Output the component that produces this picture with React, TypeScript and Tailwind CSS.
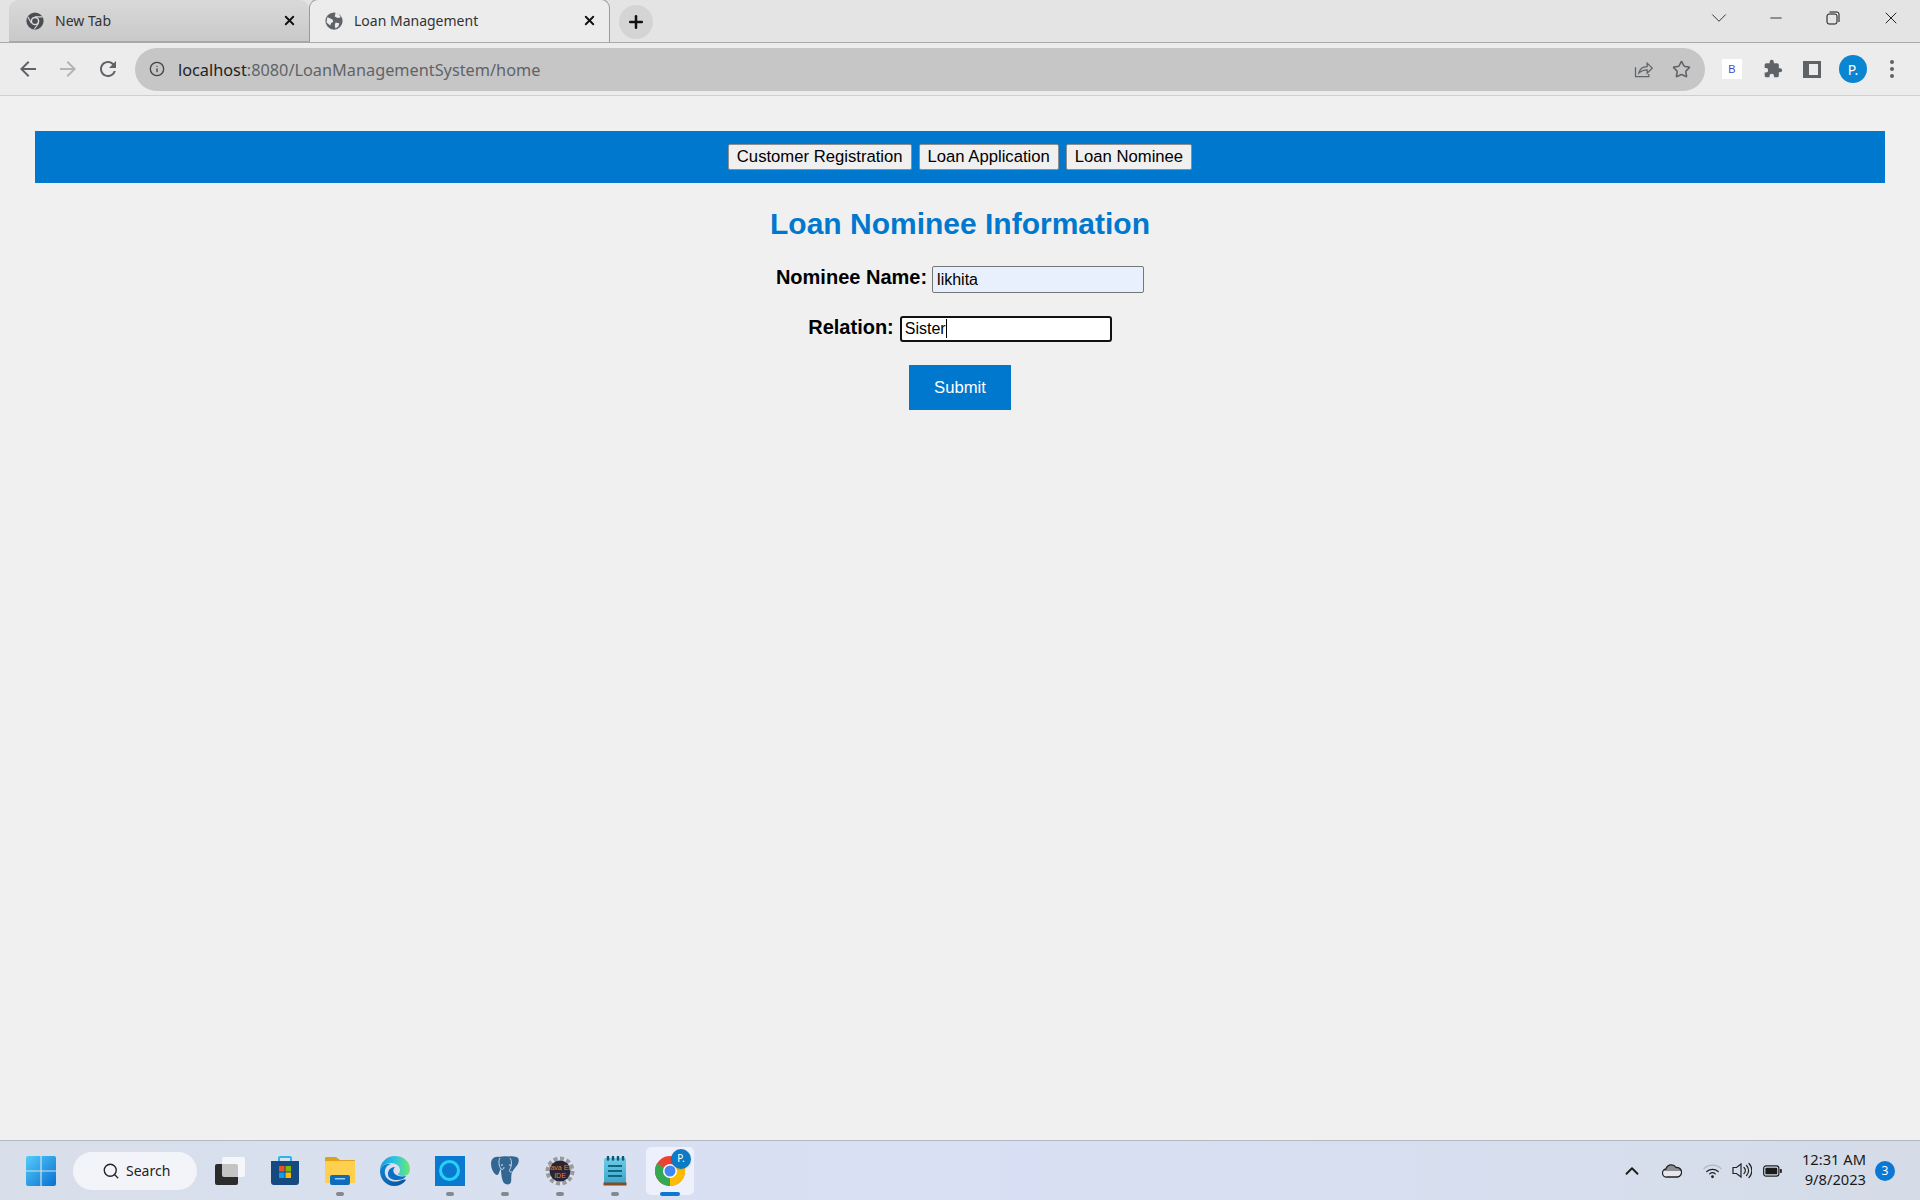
import { ChevronDown, ChevronUp, Info, Minus, Plus, Search, Star, X } from 'lucide-react'

const uiFont = 'font-["Noto_Sans",sans-serif]'

function ChromeGlyph({ size = 18 }: { size?: number }) {
  return (
    <svg width={size} height={size} viewBox="0 0 24 24">
      <circle cx="12" cy="12" r="11.500" fill="#4a4d52" />
      <circle cx="12" cy="12" r="5.800" fill="#dcdcdc" />
      <circle cx="12" cy="12" r="3.800" fill="#4a4d52" />
      <path d="M12 6.500h10M7.200 15 2.500 6.500M16.800 15 11 23" stroke="#dcdcdc" strokeWidth="1.400" />
    </svg>
  )
}

function GlobeGlyph() {
  return (
    <svg width="18" height="18" viewBox="0 0 24 24">
      <circle cx="12" cy="12" r="11.500" fill="#5f6368" />
      <path d="M3 7c3 1 5 2 7 3l1 3-3 2-1 3-5-4zM14 1l4 1 3 5-4 1-4-2zM14 14l5 1-1 4-4 3-1-4z" fill="#ececec" />
    </svg>
  )
}

function Tab({ title, active, icon }: { title: string; active?: boolean; icon: React.ReactNode }) {
  return (
    <div
      className={
        active
          ? 'flex h-[43px] w-[301px] items-center rounded-t-[9px] border border-b-0 border-[#9a9a9a] bg-[#ececec] pb-[1px] pl-[15px] pr-[12px]'
          : 'flex h-[42px] w-[300px] items-center rounded-t-[9px] border-b border-[#a8a8a8] bg-gradient-to-b from-[#d9d9d9] to-[#c9c9c9] pl-[17px] pr-[12px]'
      }
    >
      {icon}
      <span className="ml-[11px] flex-1 text-[14px] text-[#333333]">{title}</span>
      <X size={15} strokeWidth={3} className="text-[#111111]" />
    </div>
  )
}

function BrowserChrome() {
  return (
    <div className={uiFont}>
      <div className="flex h-[43px] items-end border-b border-[#a9a9a9] bg-[#e4e4e4] pl-[9px]">
        <Tab title="New Tab" icon={<ChromeGlyph />} />
        <Tab title="Loan Management" active icon={<GlobeGlyph />} />
        <div className="mb-[3px] ml-[9px] flex h-[34px] w-[34px] items-center justify-center rounded-full bg-[#d4d4d4]">
          <Plus size={20} strokeWidth={3} className="text-[#111111]" />
        </div>
        <div className="mb-[8px] ml-auto flex h-[32px] items-center">
          <ChevronDown size={26} strokeWidth={0.9} className="text-[#333333]" />
          <div className="ml-[37px] flex h-[32px] w-[14px] items-center"><Minus size={18} strokeWidth={1.1} className="shrink-0 -translate-x-[2px] text-[#111111]" /></div>
          <svg className="ml-[43px]" width="14" height="14" viewBox="0 0 14 14" fill="none" stroke="#111111" strokeWidth="1">
            <rect x="1" y="3" width="10" height="10" rx="2" />
            <path d="M3.500 1h7.500a2 2 0 0 1 2 2v8" />
          </svg>
          <X size={20} strokeWidth={1.1} className="ml-[41px] mr-[19px] text-[#111111]" />
        </div>
      </div>
      <div className="flex h-[53px] items-center border-b border-[#d0d0d0] bg-[#ececec] pl-[16px]">
        <svg width="24" height="24" viewBox="0 0 24 24" fill="#5f6368">
          <path d="M20 11H7.830l5.590-5.590L12 4l-8 8 8 8 1.410-1.410L7.830 13H20v-2z" />
        </svg>
        <svg className="ml-[16px]" width="24" height="24" viewBox="0 0 24 24" fill="#b4b4b4">
          <path d="M12 4l-1.410 1.410L16.170 11H4v2h12.170l-5.580 5.590L12 20l8-8z" />
        </svg>
        <svg className="ml-[16px]" width="24" height="24" viewBox="0 0 24 24" fill="#5f6368">
          <path d="M17.650 6.350A7.958 7.958 0 0 0 12 4c-4.420 0-7.990 3.580-7.990 8s3.570 8 7.990 8c3.730 0 6.840-2.550 7.730-6h-2.080A5.990 5.990 0 0 1 12 18c-3.310 0-6-2.690-6-6s2.690-6 6-6c1.660 0 3.140.690 4.220 1.780L13 11h7V4l-2.350 2.350z" />
        </svg>
        <div className="ml-[15px] flex h-[43px] w-[1570px] items-center rounded-full bg-[#c6c6c6] pl-[14px] pr-[14px]">
          <Info size={16} strokeWidth={2} className="text-[#444444]" />
          <span className="ml-[13px] flex-1 pt-[2px] text-[16.300px] text-[#5f6368]">
            <span className="text-[#222222]">localhost</span>:8080/LoanManagementSystem/home
          </span>
          <svg width="20" height="20" viewBox="0 0 24 24" fill="none" stroke="#5f6368" strokeWidth="1.500">
            <path d="M3 10v11h16v-3" />
            <path d="M7 17c1-5 5-8 10-8V5l6 6-6 6v-4c-4 0-7 1-10 4z" />
          </svg>
          <Star size={19} strokeWidth={2} className="ml-[19px] text-[#5f6368]" />
        </div>
        <div className="ml-[17px] flex h-[20px] w-[20px] items-center justify-center bg-white font-['Liberation_Sans',sans-serif] text-[11px] text-[#4a4ac0]">B</div>
        <svg className="ml-[21px]" width="20" height="20" viewBox="0 0 24 24" fill="#5f6368">
          <path d="M20.500 11H19V7a2 2 0 0 0-2-2h-4V3.500a2.500 2.500 0 0 0-5 0V5H4a2 2 0 0 0-2 2v3.800h1.500a2.700 2.700 0 0 1 0 5.400H2V20a2 2 0 0 0 2 2h3.800v-1.500a2.700 2.700 0 0 1 5.400 0V22H17a2 2 0 0 0 2-2v-4h1.500a2.500 2.500 0 0 0 0-5z" />
        </svg>
        <div className="ml-[20px] flex h-[17px] w-[18px] justify-end border-[3px] border-[#5f6368] bg-[#5f6368]">
          <div className="w-[9px] bg-[#ececec]" />
        </div>
        <div className="ml-[18px] flex h-[28px] w-[28px] items-center justify-center rounded-full bg-[#0a85d1] text-[14px] text-white">P.</div>
        <div className="ml-[23px] flex flex-col gap-[3px]">
          <span className="h-[4px] w-[4px] rounded-full bg-[#5f6368]" />
          <span className="h-[4px] w-[4px] rounded-full bg-[#5f6368]" />
          <span className="h-[4px] w-[4px] rounded-full bg-[#5f6368]" />
        </div>
      </div>
    </div>
  )
}

function NavButton({ label }: { label: string }) {
  return (
    <button type="button" className="h-[26px] rounded-[2px] border border-[#8f8f8f] bg-[#f0f0f0] px-[8px] pb-[2px] text-[16.670px] leading-[19px] text-black">
      {label}
    </button>
  )
}

function LoanPage() {
  return (
    <main className="flex flex-1 flex-col items-center bg-[#f0f0f0] px-[35px] pt-[35px] font-['Liberation_Sans',sans-serif]">
      <nav className="flex h-[52px] w-full items-center justify-center gap-[7px] bg-[#0078ce]">
        <NavButton label="Customer Registration" />
        <NavButton label="Loan Application" />
        <NavButton label="Loan Nominee" />
      </nav>
      <h1 className="mt-[23px] text-[30px] leading-[35px] font-bold text-[#0078ce]">Loan Nominee Information</h1>
      <form className="flex flex-col items-center">
        <div className="mt-[25px] flex items-start gap-[5px]">
          <label className="text-[20px] leading-[23px] font-bold text-black">Nominee Name:</label>
          <input
            readOnly
            value="likhita"
            className="h-[27px] w-[212px] rounded-[2px] border border-[#767676] bg-[#e8f0fe] px-[4px] text-[16px] text-black outline-none"
          />
        </div>
        <div className="mt-[23px] flex items-start gap-[6px]">
          <label className="text-[20px] leading-[23px] font-bold text-black">Relation:</label>
          <div className="relative">
            <input
              readOnly
              value="Sister"
              className="block h-[26px] w-[212px] rounded-[3px] border-2 border-[#111111] bg-white px-[3px] text-[16px] text-black outline-none"
            />
            <span className="absolute top-[3px] left-[46px] h-[19px] w-px bg-black" />
          </div>
        </div>
        <button type="button" className="mt-[23px] h-[45px] w-[102px] bg-[#0078ce] text-[16.670px] text-white">
          Submit
        </button>
      </form>
    </main>
  )
}

function TaskItem({ children, running }: { children: React.ReactNode; running?: boolean }) {
  return (
    <div className="relative flex h-[60px] w-[55px] items-center justify-center">
      {children}
      {running && <span className="absolute bottom-[5px] h-[4px] w-[8px] rounded-full bg-[#84888f]" />}
    </div>
  )
}

function Taskbar() {
  return (
    <footer className={`flex h-[60px] items-center border-t border-[#b4b8c4] bg-gradient-to-r from-[#d8dfea] via-[#d9e0f5] to-[#d5dce8] pl-[13px] ${uiFont}`}>
      <TaskItem>
        <svg width="30" height="30" viewBox="0 0 30 30">
          <defs>
            <linearGradient id="win" x1="0" y1="0" x2="1" y2="1">
              <stop offset="0" stopColor="#52cdfb" />
              <stop offset="1" stopColor="#0a6fd0" />
            </linearGradient>
          </defs>
          <path d="M0 2a2 2 0 0 1 2-2h12.400v14.400H0zM15.600 0H28a2 2 0 0 1 2 2v12.400H15.600zM0 15.600h14.400V30H2a2 2 0 0 1-2-2zM15.600 15.600H30V28a2 2 0 0 1-2 2H15.600z" fill="url(#win)" />
        </svg>
      </TaskItem>
      <div className="ml-[5px] flex h-[38px] w-[124px] items-center rounded-full bg-[#f2f4f9] pl-[29px] text-[#222222]">
        <Search size={18} strokeWidth={1.8} />
        <span className="ml-[6px] text-[14px]">Search</span>
      </div>
      <div className="ml-[5px]" />
      <TaskItem>
        <svg width="30" height="28" viewBox="0 0 30 28">
          <rect x="0" y="7" width="23" height="21" rx="2" fill="#2b2b2b" />
          <rect x="7" y="0" width="23" height="20" rx="2" fill="#ffffff" fillOpacity="0.72" />
        </svg>
      </TaskItem>
      <TaskItem>
        <svg width="30" height="30" viewBox="0 0 30 30">
          <path d="M9 5V2a1 1 0 0 1 1-1h10a1 1 0 0 1 1 1v3" fill="none" stroke="#29b6e8" strokeWidth="2" />
          <path d="M1 5h28v21a3 3 0 0 1-3 3H4a3 3 0 0 1-3-3z" fill="#15497f" />
          <rect x="9" y="10" width="5.500" height="5.500" fill="#f25022" />
          <rect x="15.500" y="10" width="5.500" height="5.500" fill="#7fba00" />
          <rect x="9" y="16.500" width="5.500" height="5.500" fill="#00a4ef" />
          <rect x="15.500" y="16.500" width="5.500" height="5.500" fill="#ffb900" />
        </svg>
      </TaskItem>
      <TaskItem running>
        <svg width="30" height="30" viewBox="0 0 30 30">
          <path d="M0 2a1 1 0 0 1 1-1h10l4 3h14a1 1 0 0 1 1 1v4H0z" fill="#dba21a" />
          <rect x="0" y="5" width="30" height="22" rx="1" fill="#ffd04f" />
          <rect x="5" y="19" width="20" height="10" rx="2" fill="#0f6cbd" />
          <rect x="10" y="22" width="10" height="1.500" fill="#8fd0f5" />
        </svg>
      </TaskItem>
      <TaskItem>
        <svg width="30" height="30" viewBox="0 0 30 30">
          <defs>
            <linearGradient id="edgeTop" x1="0" y1="0.500" x2="1" y2="0.500">
              <stop offset="0" stopColor="#1a9bd8" />
              <stop offset="0.500" stopColor="#2fc4e0" />
              <stop offset="1" stopColor="#6eea6e" />
            </linearGradient>
            <linearGradient id="edgeLow" x1="0" y1="0" x2="1" y2="1">
              <stop offset="0" stopColor="#0f87d8" />
              <stop offset="1" stopColor="#0a4f9a" />
            </linearGradient>
          </defs>
          <path d="M0 15C0 6 7 0 15 0c9 0 15 6 15 13 0 5-3 7-7 7-3 0-5-1-5-2 1-1 2-2 2-4 0-4-4-7-9-7C5 7 1 11 0 15z" fill="url(#edgeTop)" />
          <path d="M0 15c1-5 6-8 11-7-4 1-7 5-6 10 1 6 8 9 14 7 3-1 6-2 7-1-3 4-7 6-12 6C6 30 0 23 0 15z" fill="url(#edgeLow)" />
          <path d="M8 18c0-4 3-7 7-7-2 2-2 4-1 6 2 3 7 4 12 3-2 3-5 4-9 4-5 0-9-2-9-6z" fill="#0c6fc4" />
        </svg>
      </TaskItem>
      <TaskItem running>
        <div className="flex h-[30px] w-[30px] items-center justify-center bg-[#0a7ad1]">
          <div className="h-[21px] w-[21px] rounded-full border-[3px] border-[#27d0f5]" />
        </div>
      </TaskItem>
      <TaskItem running>
        <svg width="28" height="29" viewBox="0 0 28 29">
          <path d="M8 1C3 0 0 3 0 8c0 4 2 8 4 10 2 2 3 1 4-1 .5-2 1-3 2-4 0 5 1 12 3 14 2 2 6 2 7-1 .5-2 0-5 .5-8 .5-3 3-5 5-8 3-4 3-8 0-9-3-1-5-1-8-.5C15 0 11 0 8 1z" fill="#336791" />
          <path d="M9 2c-2 3-1 8 1 11M19 2c2 3 2 7 0 11-1 2-1 3 2 3M10 13c2 1 3 0 3-2" fill="none" stroke="#e8ecf8" strokeWidth="0.800" />
          <circle cx="11" cy="9" r="0.800" fill="#ffffff" />
          <circle cx="19" cy="9" r="0.800" fill="#ffffff" />
        </svg>
      </TaskItem>
      <TaskItem running>
        <svg width="30" height="30" viewBox="0 0 30 30">
          <circle cx="15" cy="15" r="12.500" fill="none" stroke="#9a9a9a" strokeWidth="4" strokeDasharray="4 2.500" />
          <circle cx="15" cy="15" r="10.500" fill="#2a2536" />
          <text x="15" y="13.500" textAnchor="middle" fontSize="7" fontFamily="Liberation Sans" fill="#e8821e">Java EE</text>
          <text x="15" y="21.500" textAnchor="middle" fontSize="7" fontFamily="Liberation Sans" fill="#e8821e">IDE</text>
        </svg>
      </TaskItem>
      <TaskItem running>
        <svg width="24" height="30" viewBox="0 0 24 30">
          <defs>
            <linearGradient id="note" x1="0" y1="0" x2="0" y2="1">
              <stop offset="0" stopColor="#6dcbe6" />
              <stop offset="1" stopColor="#3ba6cc" />
            </linearGradient>
          </defs>
          <rect x="1" y="2" width="22" height="26" rx="1.500" fill="url(#note)" />
          <rect x="0.500" y="26.500" width="23" height="3" fill="#8a4a20" />
          <path d="M5 10h14M5 15h14M5 20h14" stroke="#12667f" strokeWidth="2" />
          <path d="M5 1v2.500M10 1v2.500M15 1v2.500M20 1v2.500" stroke="#12566f" strokeWidth="2.500" strokeLinecap="round" />
        </svg>
      </TaskItem>
      <div className="relative ml-[4px] flex h-[48px] w-[48px] items-center justify-center rounded-[5px] bg-[#eef1fb]">
        <svg width="30" height="30" viewBox="0 0 30 30">
          <circle cx="15" cy="15" r="15" fill="#ea4335" />
          <path d="M2 7.500 15 15 15 30A15 15 0 0 1 2 7.500z" fill="#34a853" />
          <path d="M15 15 28 7.500A15 15 0 0 1 15 30z" fill="#fbbc04" />
          <circle cx="15" cy="15" r="7" fill="#ffffff" />
          <circle cx="15" cy="15" r="5.500" fill="#4285f4" />
        </svg>
        <span className="absolute top-[2px] right-[3px] flex h-[20px] w-[20px] items-center justify-center rounded-full bg-[#0a7bc4] text-[10px] text-white shadow-sm">P.</span>
        <span className="absolute bottom-[-1px] h-[4px] w-[20px] rounded-full bg-[#0a78d4]" />
      </div>
      <div className="ml-auto flex items-center pr-[25px] text-[#1a1a1a]">
        <ChevronUp size={22} strokeWidth={2} />
        <svg className="ml-[19px]" width="20" height="14" viewBox="0 0 20 14">
          <defs>
            <linearGradient id="cloud" x1="0" y1="0" x2="0" y2="1">
              <stop offset="0.500" stopColor="#8b8d90" />
              <stop offset="0.501" stopColor="#e6e8ec" />
            </linearGradient>
          </defs>
          <path d="M5 13a4 4 0 0 1-1-8 5.500 5.500 0 0 1 10-1.500A4.800 4.800 0 0 1 15.500 13z" fill="url(#cloud)" stroke="#222222" strokeWidth="1.300" />
        </svg>
        <svg className="ml-[21px]" width="19" height="16" viewBox="0 0 20 16" fill="none" strokeLinecap="round">
          <path d="M1 5.500a13 13 0 0 1 18 0" stroke="#b0b4bb" strokeWidth="1.200" />
          <path d="M4 8.500a9 9 0 0 1 12 0M7 11a4.500 4.500 0 0 1 6 0" stroke="#222222" strokeWidth="1.300" />
          <circle cx="10" cy="14" r="1.500" fill="#222222" />
        </svg>
        <svg className="ml-[10px]" width="20" height="17" viewBox="0 0 20 17" fill="none" stroke="#222222" strokeWidth="1.200" strokeLinecap="round">
          <path d="M1 5.500h3.500L9 2v13l-4.500-3.500H1z" />
          <path d="M12 5.500a4 4 0 0 1 0 6M14.500 3.500a7 7 0 0 1 0 10M17 1.500a10 10 0 0 1 0 14" />
        </svg>
        <svg className="ml-[11px]" width="19" height="12" viewBox="0 0 20 12">
          <rect x="0.700" y="0.700" width="16" height="10.600" rx="2.500" fill="none" stroke="#222222" strokeWidth="1.300" />
          <rect x="2.500" y="2.500" width="12.500" height="7" rx="1" fill="#1a1a1a" />
          <rect x="17.800" y="4" width="2" height="4" fill="#222222" />
        </svg>
        <div className="mb-[4px] ml-[20px] flex w-[64px] flex-col items-end whitespace-nowrap text-[14.700px] leading-[20px]">
          <span>12:31 AM</span>
          <span>9/8/2023</span>
        </div>
        <span className="ml-[9px] flex h-[20px] w-[20px] items-center justify-center rounded-full bg-[#0a78d4] text-[12px] text-white">3</span>
      </div>
    </footer>
  )
}

export default function App() {
  return (
    <div className="flex h-[1200px] flex-col overflow-hidden">
      <BrowserChrome />
      <LoanPage />
      <Taskbar />
    </div>
  )
}
